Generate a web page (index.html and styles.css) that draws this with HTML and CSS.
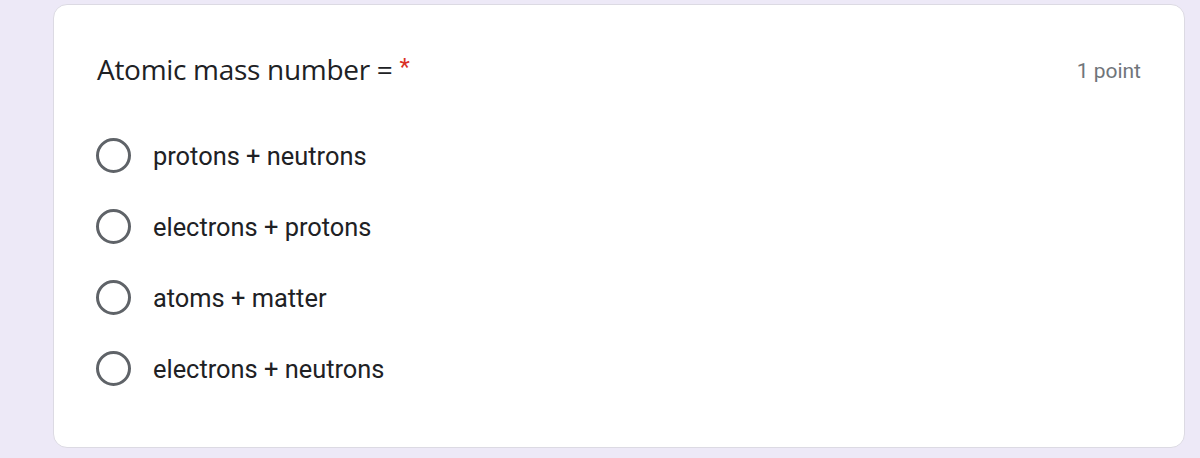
FILE: index.html
```html
<!DOCTYPE html>
<html>
<head>
<meta charset="utf-8">
<link rel="stylesheet" href="styles.css">
</head>
<body>
<div class="page">
  <div class="card">
    <div class="head">
      <div class="title">Atomic mass number = <span class="req">*</span></div>
      <div class="points">1 point</div>
    </div>
    <div class="options">
      <label class="opt"><span class="radio"></span><span class="txt">protons + neutrons</span></label>
      <label class="opt"><span class="radio"></span><span class="txt">electrons + protons</span></label>
      <label class="opt"><span class="radio"></span><span class="txt">atoms + matter</span></label>
      <label class="opt"><span class="radio"></span><span class="txt">electrons + neutrons</span></label>
    </div>
  </div>
</div>
</body>
</html>
```
FILE: styles.css
```css
html, body {
  margin: 0;
  padding: 0;
  background: #ede9f7;
  width: 1200px;
  height: 458px;
  overflow: hidden;
}
.page {
  padding: 4px 15px 0 53px;
}
.card {
  box-sizing: border-box;
  width: 1132px;
  height: 444px;
  background: #ffffff;
  border: 1px solid #dcdae3;
  border-radius: 14px;
  padding: 43px 43px 0 43px;
}
.head {
  display: flex;
  justify-content: space-between;
  align-items: flex-start;
}
.title {
  font-family: "Open Sans", sans-serif;
  font-size: 28px;
  line-height: 38px;
  color: #202124;
  letter-spacing: -0.3px;
}
.req {
  font-family: Roboto, sans-serif;
  font-size: 24px;
  color: #d93025;
  margin-left: 0;
  vertical-align: 5px;
}
.points {
  font-family: Roboto, sans-serif;
  font-size: 21px;
  line-height: 24px;
  color: #70757a;
  margin-top: 11px;
}
.options {
  display: flex;
  flex-direction: column;
  margin-top: 32px;
}
.opt {
  display: flex;
  align-items: center;
  height: 71px;
}
.radio {
  box-sizing: border-box;
  width: 35px;
  height: 35px;
  border: 3px solid #5f6368;
  border-radius: 50%;
  flex: none;
  margin-left: -1px;
}
.txt {
  margin-left: 22px;
  font-family: Roboto, sans-serif;
  font-size: 25.4px;
  color: #202124;
}
```
